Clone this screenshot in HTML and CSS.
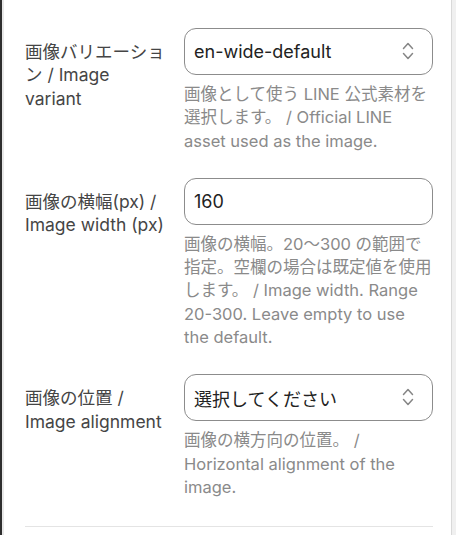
FILE: index.html
```html
<!DOCTYPE html>
<html lang="ja">
<head>
<meta charset="utf-8">
<link rel="stylesheet" href="styles.css">
</head>
<body>
<div class="panel">
  <div class="field">
    <label class="label">画像バリエーション / Image variant</label>
    <div class="control-col">
      <div class="control select">
        <span>en-wide-default</span>
        <svg class="chev" viewBox="0 0 12 20" width="12" height="20"><path d="M1.5 7.5 6 2.5 10.5 7.5M1.5 12.5 6 17.5 10.5 12.5" fill="none" stroke="#868686" stroke-width="1.5" stroke-linecap="round" stroke-linejoin="round"/></svg>
      </div>
      <p class="help">画像として使う LINE 公式素材を選択します。 / Official LINE asset used as the image.</p>
    </div>
  </div>
  <div class="field">
    <label class="label">画像の横幅(px) / Image width (px)</label>
    <div class="control-col">
      <div class="control"><span>160</span></div>
      <p class="help">画像の横幅。20～300 の範囲で指定。空欄の場合は既定値を使用します。 / Image width. Range 20-300. Leave empty to use the default.</p>
    </div>
  </div>
  <div class="field">
    <label class="label">画像の位置 / Image alignment</label>
    <div class="control-col">
      <div class="control select">
        <span>選択してください</span>
        <svg class="chev" viewBox="0 0 12 20" width="12" height="20"><path d="M1.5 7.5 6 2.5 10.5 7.5M1.5 12.5 6 17.5 10.5 12.5" fill="none" stroke="#868686" stroke-width="1.5" stroke-linecap="round" stroke-linejoin="round"/></svg>
      </div>
      <p class="help">画像の横方向の位置。 / Horizontal alignment of the image.</p>
    </div>
  </div>
  <div class="divider"></div>
</div>
</body>
</html>
```

FILE: styles.css
```css
html, body {
  margin: 0;
  padding: 0;
}
body {
  background: #f0f0f0;
  font-family: Inter, "Noto Sans CJK JP", sans-serif;
}
.panel {
  box-sizing: border-box;
  width: 452px;
  min-height: 535px;
  background: #ffffff;
  border-left: 2px solid #2e2e2e;
  border-right: 1px solid #d9d9d9;
  box-shadow: inset 2px 0 0 #e8e8e8;
  padding: 28px 18px 0 23px;
  display: flex;
  flex-direction: column;
  gap: 25px;
}
.field {
  display: grid;
  grid-template-columns: 145px 249px;
  column-gap: 14px;
}
.label {
  padding-top: 12px;
  font-size: 17.5px;
  line-height: 23.3px;
  color: #454545;
}
.control {
  box-sizing: border-box;
  height: 47px;
  border: 1px solid #8c8c8c;
  border-radius: 12px;
  padding: 0 9px;
  display: flex;
  align-items: center;
  justify-content: space-between;
  font-size: 18px;
  color: #222;
  background: #fff;
}
.chev {
  margin-right: 9px;
  margin-top: -2px;
}
.help {
  margin: 8px 0 0;
  font-size: 16.5px;
  line-height: 23.3px;
  color: #8a8a8a;
}
.divider {
  margin-top: 2px;
  border-top: 1px solid #e4e4e4;
}
```
